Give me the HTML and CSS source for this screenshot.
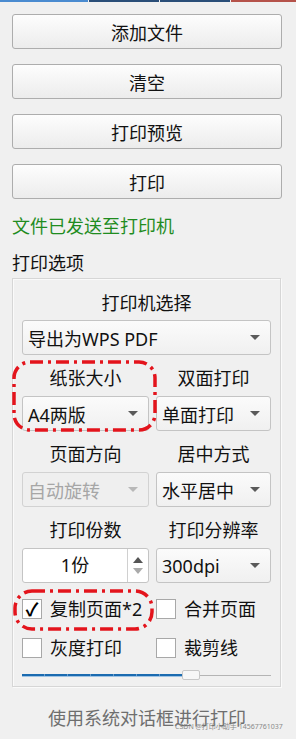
FILE: index.html
```html
<!DOCTYPE html>
<html>
<head>
  <title>打印</title>
  <meta charset="utf-8">
  <link rel="stylesheet" href="styles.css">
</head>
<body>
  <div class="tab-strip">
    <span class="tab tab-blue"></span>
    <span class="tab tab-navy"></span>
    <span class="tab tab-navy"></span>
    <span class="tab tab-red"></span>
  </div>

  <div class="panel">
    <!-- main actions -->
    <div class="actions">
      <button class="btn">添加文件</button>
      <button class="btn">清空</button>
      <button class="btn">打印预览</button>
      <button class="btn">打印</button>
    </div>

    <div class="status">文件已发送至打印机</div>
    <div class="section-title">打印选项</div>

    <div class="group">
      <div class="field-label">打印机选择</div>
      <div class="combo combo-wide"><span>导出为WPS PDF</span><i class="arrow"></i></div>

      <div class="fields">
        <div class="field">
          <div class="field-label">纸张大小</div>
          <div class="combo"><span>A4两版</span><i class="arrow"></i></div>
        </div>
        <div class="field">
          <div class="field-label">双面打印</div>
          <div class="combo"><span>单面打印</span><i class="arrow"></i></div>
        </div>
        <div class="field">
          <div class="field-label">页面方向</div>
          <div class="combo disabled"><span>自动旋转</span><i class="arrow"></i></div>
        </div>
        <div class="field">
          <div class="field-label">居中方式</div>
          <div class="combo"><span>水平居中</span><i class="arrow"></i></div>
        </div>
        <div class="field">
          <div class="field-label">打印份数</div>
          <div class="spin">
            <span class="spin-value">1份</span>
            <span class="spin-buttons"><i class="up"></i><i class="down"></i></span>
          </div>
        </div>
        <div class="field">
          <div class="field-label">打印分辨率</div>
          <div class="combo"><span>300dpi</span><i class="arrow"></i></div>
        </div>
      </div>

      <div class="checks">
        <label class="check"><span class="box checked">✓</span>复制页面*2</label>
        <label class="check"><span class="box"></span>合并页面</label>
        <label class="check"><span class="box"></span>灰度打印</label>
        <label class="check"><span class="box"></span>裁剪线</label>
      </div>

      <div class="slider">
        <div class="slider-fill"></div>
        <div class="slider-handle"></div>
        <div class="slider-rest"></div>
      </div>

      <!-- red annotation marks -->
      <svg class="mark mark-paper" width="145" height="72" viewBox="0 0 145 72">
        <rect x="2" y="2" width="141" height="68" rx="16" fill="none" stroke="#e3141c" stroke-width="3.5" stroke-dasharray="13 5 3 5"/>
      </svg>
      <svg class="mark mark-copy" width="141" height="42" viewBox="0 0 141 42">
        <rect x="2" y="2" width="137" height="38" rx="17" fill="none" stroke="#e3141c" stroke-width="3.5" stroke-dasharray="13 5 3 5"/>
      </svg>
    </div>

    <div class="footer">
      <button class="link-btn">使用系统对话框进行打印</button>
      <span class="watermark">CSDN @打印小助手 14567761037</span>
    </div>
  </div>
</body>
</html>
```

FILE: styles.css
```css
body {
  margin: 0;
  background: #f0f0f0;
  width: 296px;
  height: 739px;
  overflow: hidden;
  font-family: "Noto Sans", "Noto Sans CJK SC", sans-serif;
  font-size: 18px;
  color: #111;
}

.tab-strip {
  display: flex;
  height: 2px;
}

.tab {
  height: 2px;
}

.tab-blue {
  width: 88px;
  background: #4a8bd0;
}

.tab-navy {
  width: 70px;
  margin-left: 1px;
  background: #2a4e78;
}

.tab-red {
  flex: 1;
  margin-left: 1px;
  background: #b5524a;
}

.panel {
  position: relative;
  padding: 12px 14px 0 12px;
}

.actions {
  display: flex;
  flex-direction: column;
  gap: 15px;
}

.btn {
  height: 35px;
  width: 270px;
  border: 1px solid #adadad;
  border-radius: 3px;
  background: linear-gradient(#fdfdfd, #ececec);
  font-family: inherit;
  font-size: 18px;
  color: #111;
  padding: 0;
}

.status {
  margin-top: 15px;
  line-height: 24px;
  color: #1f8c1f;
}

.section-title {
  margin-top: 13px;
  line-height: 24px;
}

.group {
  position: relative;
  margin-top: 3px;
  height: 409px;
  border: 1px solid #d6d6d6;
  box-shadow: inset 1px 1px 0 #fafafa, 1px 1px 0 #fafafa;
  padding: 0 9px;
  box-sizing: border-box;
  width: 269px;
}

.group > .field-label {
  margin-top: 12px;
}

.field-label {
  line-height: 24px;
  text-align: center;
}

.combo {
  display: flex;
  align-items: center;
  justify-content: space-between;
  height: 35px;
  box-sizing: border-box;
  padding: 0 10px 0 5px;
  border: 1px solid #c4c4c4;
  border-radius: 3px;
  background: linear-gradient(#fbfbfb, #f0f0f0);
  margin-top: 5px;
  white-space: nowrap;
}

.arrow {
  width: 0;
  height: 0;
  border-left: 5px solid transparent;
  border-right: 5px solid transparent;
  border-top: 5px solid #5a5a5a;
}

.combo.disabled {
  color: #a6a6a6;
  border-color: #d2d2d2;
  background: #efefef;
}

.combo.disabled .arrow {
  border-top-color: #b8b8b8;
}

.fields {
  display: grid;
  grid-template-columns: 127px 115px;
  column-gap: 7px;
}

.field {
  margin-top: 11px;
}

.field .combo,
.field .spin {
  margin-top: 6px;
}

.spin {
  display: flex;
  height: 35px;
  box-sizing: border-box;
  border: 1px solid #c4c4c4;
  border-radius: 3px;
  background: #fff;
}

.spin-value {
  flex: 1;
  text-align: center;
  line-height: 33px;
}

.spin-buttons {
  width: 20px;
  border-left: 1px solid #d0d0d0;
  display: flex;
  flex-direction: column;
  align-items: center;
  justify-content: center;
  gap: 5px;
}

.spin-buttons .up {
  border-left: 5px solid transparent;
  border-right: 5px solid transparent;
  border-bottom: 6px solid #555;
}

.spin-buttons .down {
  border-left: 5px solid transparent;
  border-right: 5px solid transparent;
  border-top: 6px solid #aaa;
}

.checks {
  display: grid;
  grid-template-columns: 134px 115px;
  row-gap: 19px;
  margin-top: 16px;
}

.check {
  display: flex;
  align-items: center;
  gap: 8px;
  height: 20px;
  line-height: 20px;
  white-space: nowrap;
}

.box {
  width: 20px;
  height: 20px;
  box-sizing: border-box;
  border: 1px solid #a8a8a8;
  background: #fff;
  font-size: 18px;
  font-weight: 700;
  line-height: 18px;
  text-align: center;
  color: #000;
}

.slider {
  display: flex;
  align-items: center;
  height: 12px;
  margin-top: 11px;
}

.slider-fill {
  width: 160px;
  height: 2px;
  background: #1b6bb0;
  box-shadow: 0 1px 0 #9ec3e4;
  background-image: repeating-linear-gradient(90deg, #1b6bb0 0 22px, #6a9cca 22px 23px);
}

.slider-handle {
  width: 18px;
  height: 10px;
  box-sizing: border-box;
  border: 1px solid #c8c8c8;
  border-radius: 2px;
  background: #f7f7f7;
}

.slider-rest {
  flex: 1;
  height: 1px;
  background: #b4b4b4;
}

.mark {
  position: absolute;
}

.mark-paper {
  left: -1px;
  top: 81px;
}

.mark-copy {
  left: 0px;
  top: 310px;
}

.footer {
  position: relative;
  text-align: center;
  margin-top: 19px;
}

.link-btn {
  border: none;
  background: none;
  padding: 0;
  font-family: inherit;
  font-size: 18px;
  line-height: 24px;
  color: #6e6e6e;
}

.watermark {
  position: absolute;
  left: 163px;
  top: 15px;
  font-size: 7px;
  color: #8a8a8a;
  white-space: nowrap;
}
```
